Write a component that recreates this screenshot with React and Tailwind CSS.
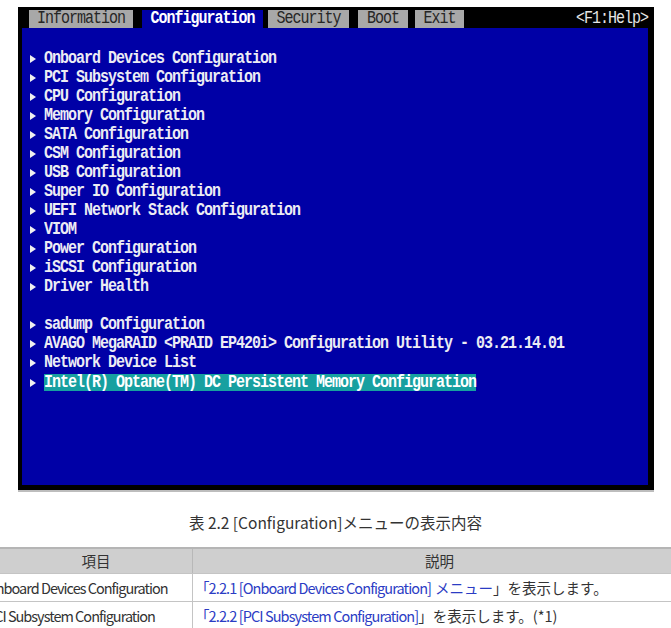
const tabs = [
  { label: "Information", w: "w-[104px]", ml: "ml-[11px]", active: false },
  { label: "Configuration", w: "w-[121px]", ml: "ml-[9px]", active: true },
  { label: "Security", w: "w-[81px]", ml: "ml-[5px]", active: false },
  { label: "Boot", w: "w-[50px]", ml: "ml-[9px]", active: false },
  { label: "Exit", w: "w-[49px]", ml: "ml-[7px]", active: false },
];

const groupA = [
  "Onboard Devices Configuration",
  "PCI Subsystem Configuration",
  "CPU Configuration",
  "Memory Configuration",
  "SATA Configuration",
  "CSM Configuration",
  "USB Configuration",
  "Super IO Configuration",
  "UEFI Network Stack Configuration",
  "VIOM",
  "Power Configuration",
  "iSCSI Configuration",
  "Driver Health",
];

const groupB = [
  "sadump Configuration",
  "AVAGO MegaRAID <PRAID EP420i> Configuration Utility - 03.21.14.01",
  "Network Device List",
];

const mono = { fontFamily: "'Liberation Mono', 'DejaVu Sans Mono', monospace" };
const jp = { fontFamily: "'Noto Sans CJK JP', 'Noto Sans', sans-serif" };

function Arrow() {
  return (
    <svg className="w-[6px] h-[8px] shrink-0" viewBox="0 0 6 8">
      <polygon points="0,0 6,4 0,8" fill="#f0f0f0" />
    </svg>
  );
}

function MenuRow({ text, selected }) {
  return (
    <div className="flex items-center h-[19px] pl-[8px]">
      <Arrow />
      <span
        className={`ml-[8px] h-[17px] leading-[17px] font-bold text-[15px] tracking-[-1px] whitespace-pre ${
          selected ? "bg-[#17a0a0] text-white" : "text-[#ececf4]"
        }`}
      >
        <span className="inline-block scale-y-[1.22]">{text}</span>
      </span>
    </div>
  );
}

export default function App() {
  return (
    <div className="w-[671px] h-[628px] bg-white overflow-hidden">
      {/* BIOS screenshot */}
      <div className="ml-[18px] mt-[7px] w-[636px] border-b-2 border-[#bdbdbd]">
        <div className="bg-black pl-[4px] pr-[6px] pb-[5px]" style={mono}>
          <div className="flex items-end h-[21px] -ml-[4px]">
            {tabs.map((t) => (
              <div
                key={t.label}
                className={`${t.w} ${t.ml} h-[18px] flex items-center justify-center text-[15px] tracking-[-1px] ${
                  t.active ? "bg-[#0000a6] text-white font-bold" : "bg-[#a8a8a8] text-[#262626]"
                }`}
              >
                <span className="inline-block scale-y-[1.2]">{t.label}</span>
              </div>
            ))}
            <div className="ml-auto mr-[-6px] pr-[6px] h-[18px] flex items-center text-[15px] tracking-[-1px] text-[#e6e6e6]">
              <span className="inline-block scale-y-[1.2]">&lt;F1:Help&gt;</span>
            </div>
          </div>
          <div className="bg-[#0000a6] h-[457px] pt-[21px]">
            {groupA.map((t) => (
              <MenuRow key={t} text={t} />
            ))}
            <div className="h-[19px]" />
            {groupB.map((t) => (
              <MenuRow key={t} text={t} />
            ))}
            <div className="mt-[1px]">
              <MenuRow text="Intel(R) Optane(TM) DC Persistent Memory Configuration" selected />
            </div>
          </div>
        </div>
      </div>

      {/* caption */}
      <div className="mt-[20px] text-center text-[15.5px] text-[#333] leading-[20px]" style={jp}>
        表 2.2 [Configuration]メニューの表示内容
      </div>

      {/* table */}
      <div className="mt-[15px] -ml-[14px] w-[700px] text-[14.5px] text-[#333]" style={jp}>
        <div className="grid grid-cols-[207px_1fr] bg-[#cfcfcf] border-t-2 border-[#b5b5b5] h-[26px] items-center">
          <div className="pl-[14px] h-full flex items-center justify-center border-r border-[#b8b8b8]">項目</div>
          <div className="h-full flex items-center justify-center">説明</div>
        </div>
        <div className="grid grid-cols-[207px_1fr] border-t border-[#c4c4c4] h-[28px] items-center">
          <div className="h-full flex items-center border-r border-[#c4c4c4] tracking-[-1px] whitespace-nowrap">
            Onboard Devices Configuration
          </div>
          <div className="h-full flex items-center pl-[2px] whitespace-nowrap">
            <span className="text-[#2b3cc4] tracking-[-0.9px]">「2.2.1 [Onboard Devices Configuration] </span>
            <span className="text-[#2b3cc4] ml-[4px]">メニュー</span>」を表示します。
          </div>
        </div>
        <div className="grid grid-cols-[207px_1fr] border-t border-[#c4c4c4] h-[28px] items-center">
          <div className="h-full flex items-center border-r border-[#c4c4c4] tracking-[-1px] whitespace-nowrap">
            PCI Subsystem Configuration
          </div>
          <div className="h-full flex items-center pl-[2px] whitespace-nowrap">
            <span className="text-[#2b3cc4] tracking-[-0.9px]">「2.2.2 [PCI Subsystem Configuration]</span>」を表示します。(*1)
          </div>
        </div>
      </div>
    </div>
  );
}
